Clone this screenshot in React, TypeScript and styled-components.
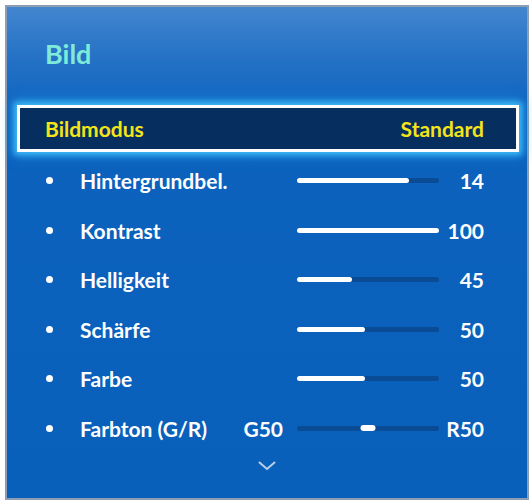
import React from "react";
import styled, { createGlobalStyle } from "styled-components";

const GlobalStyle = createGlobalStyle`
  html, body {
    margin: 0;
    padding: 0;
    background: #ffffff;
  }
  body {
    font-family: Lato, "Open Sans", "Liberation Sans", sans-serif;
  }
`;

const Page = styled.div`
  width: 532px;
  height: 501px;
  padding: 5px 3px 1px 5px;
  box-sizing: border-box;
`;

const Panel = styled.section`
  height: 100%;
  box-sizing: border-box;
  border: 2px solid #8d9db3;
  background: linear-gradient(
    to bottom,
    #4386cf 0px,
    #2572c6 50px,
    #0c62bd 110px,
    #0960bb 100%
  );
  display: flex;
  flex-direction: column;
`;

const Title = styled.h1`
  margin: 0;
  padding: 30px 0 0 38px;
  height: 98px;
  box-sizing: border-box;
  font-size: 27px;
  line-height: 34px;
  font-weight: 700;
  color: #80ead9;
`;

const Selected = styled.div`
  margin: 0 8px 0 10px;
  height: 47px;
  box-sizing: border-box;
  border: 3px solid #ffffff;
  background: #062f60;
  box-shadow: 0 0 6px 3px rgba(70, 200, 255, 0.85), 0 0 14px 4px rgba(40, 170, 255, 0.45);
  display: flex;
  align-items: center;
  justify-content: space-between;
  padding: 0 32px 0 25px;
  font-size: 21px;
  font-weight: 700;
  color: #f4e419;
`;

const List = styled.ul`
  list-style: none;
  margin: 4px 0 0;
  padding: 0 43px 0 39px;
`;

const Row = styled.li`
  height: 49.5px;
  display: grid;
  grid-template-columns: 34px 1fr auto 142px 45px;
  align-items: center;
  color: #ffffff;
  font-size: 21px;
  font-weight: 700;
`;

const Bullet = styled.span`
  width: 7px;
  height: 7px;
  border-radius: 50%;
  background: #ffffff;
`;

const Label = styled.span`
  white-space: nowrap;
`;

const SideValue = styled.span`
  margin-right: 14px;
`;

const Value = styled.span`
  text-align: right;
`;

const Track = styled.div`
  position: relative;
  height: 5px;
  border-radius: 3px;
  background: #0a4b95;
`;

const Fill = styled.div`
  height: 100%;
  border-radius: 3px;
  background: #ffffff;
`;

const Marker = styled.div`
  position: absolute;
  top: -0.5px;
  width: 15px;
  height: 6px;
  border-radius: 3px;
  background: #ffffff;
  transform: translateX(-50%);
`;

const More = styled.div`
  display: flex;
  justify-content: center;
  padding-top: 8px;
`;

type Item = {
  label: string;
  value: string;
  fill?: number;
  marker?: number;
  left?: string;
};

const items: Item[] = [
  { label: "Hintergrundbel.", value: "14", fill: 79 },
  { label: "Kontrast", value: "100", fill: 100 },
  { label: "Helligkeit", value: "45", fill: 39 },
  { label: "Schärfe", value: "50", fill: 48 },
  { label: "Farbe", value: "50", fill: 48 },
  { label: "Farbton (G/R)", value: "R50", marker: 50, left: "G50" },
];

export default function App() {
  return (
    <Page>
      <GlobalStyle />
      <Panel>
        <Title>Bild</Title>
        <Selected>
          <span>Bildmodus</span>
          <span>Standard</span>
        </Selected>
        <List>
          {items.map((item) => (
            <Row key={item.label}>
              <Bullet />
              <Label>{item.label}</Label>
              {item.left ? <SideValue>{item.left}</SideValue> : <span />}
              <Track>
                {item.fill !== undefined && <Fill style={{ width: `${item.fill}%` }} />}
                {item.marker !== undefined && <Marker style={{ left: `${item.marker}%` }} />}
              </Track>
              <Value>{item.value}</Value>
            </Row>
          ))}
        </List>
        <More>
          <svg width="18" height="10" viewBox="0 0 18 10">
            <path d="M1.5 1.5 L9 8 L16.5 1.5" fill="none" stroke="#b9cfea" strokeWidth="2" strokeLinecap="round" />
          </svg>
        </More>
      </Panel>
    </Page>
  );
}
